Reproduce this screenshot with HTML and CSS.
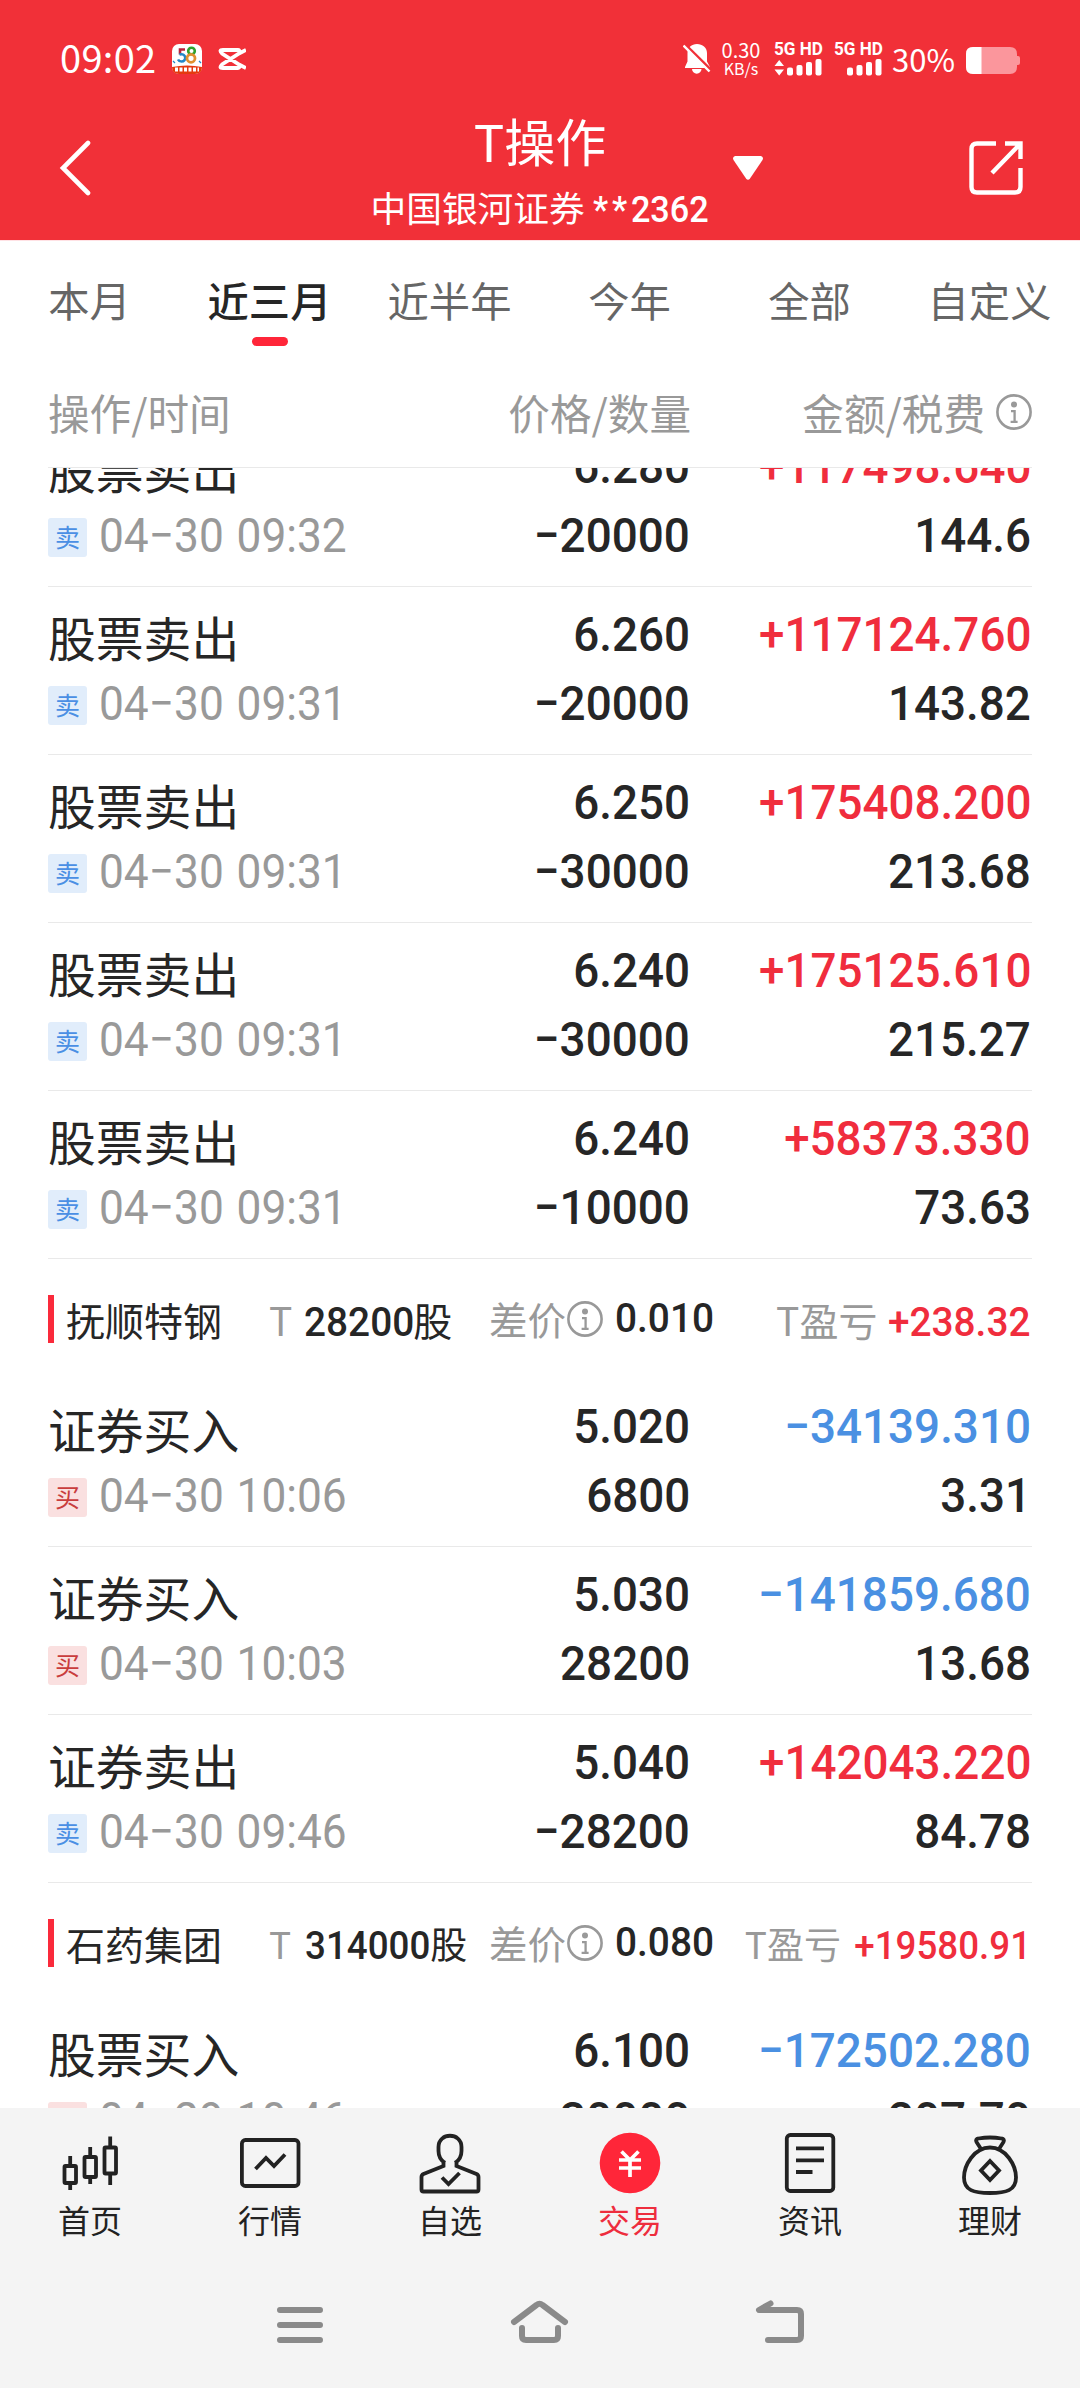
FILE: index.html
```html
<!DOCTYPE html>
<html lang="zh-CN">
<head>
<meta charset="utf-8">
<title>T操作</title>
<link rel="stylesheet" href="styles.css">
</head>
<body>
<svg class="defs" width="0" height="0">
  <symbol id="info" viewBox="0 0 36 36">
    <circle cx="18" cy="18" r="16.6" fill="none" stroke="#999" stroke-width="2.6"/>
    <circle cx="18" cy="10.6" r="3" fill="#999"/>
    <path d="M15 17.2h3.6v10.3M14.6 27.8h7" fill="none" stroke="#999" stroke-width="2.3"/>
  </symbol>
</svg>
<div class="screen">
  <header class="header">
    <div class="status">
      <span class="clock">09:02</span>
      <svg class="app58" width="30" height="30" viewBox="0 0 30 30">
        <rect width="30" height="30" rx="7" fill="#fff"/>
        <path d="M0 23q15-3 30 0q0 7-7 7H7q-7 0-7-7z" fill="#e5390f"/>
        <path d="M3 25.500h24" stroke="#fff" stroke-width="4" stroke-dasharray="3 1.500"/>
        <path d="M13 5.500H8v5" fill="none" stroke="#b8233a" stroke-width="2.600"/>
        <path d="M7.500 10.500c7-2 7.500 7 2 7q-2.500 0-3.500-2" fill="none" stroke="#2287c8" stroke-width="2.600"/>
        <circle cx="19.500" cy="7" r="3.300" fill="none" stroke="#2fa12d" stroke-width="2.600"/>
        <circle cx="19" cy="14.300" r="4" fill="none" stroke="#e09130" stroke-width="2.800"/>
        <path d="M1 17l2 2M27 17l2 2" stroke="#2287c8" stroke-width="1.200"/>
      </svg>
      <svg class="cut" width="28" height="22" viewBox="0 0 28 22">
        <path d="M28 2L21.500 5.200 4 16.500q-3.500 3.500 1 3.500h15q1.500 0 1.500-2.500M28 20L21.500 16.800 4 5.500Q.500 2 5 2h15q1.500 0 1.500 2.500" fill="none" stroke="#fff" stroke-width="3.800"/>
      </svg>
      <div class="status-right">
        <svg width="28" height="30" viewBox="0 0 28 30">
          <path d="M14 0C19.500 0 24 3.500 24 9v8.500l3 5.500v1H2v-1l2.500-5.500V9C4.500 3.500 8.500 0 14 0zM9 25h9.500a4.750 4.750 0 0 1-9.500 0z" fill="#fff"/>
          <path d="M1.500 0L29 27" stroke="#f13038" stroke-width="3"/>
          <path d="M.500 1.500L26.500 27.500" stroke="#fff" stroke-width="2.400"/>
        </svg>
        <span class="speed"><b>0.30</b><i>KB/s</i></span>
        <span class="sim sim1"><b>5G HD</b>
          <svg width="48" height="17" viewBox="0 0 48 17" fill="#fff"><path d="M.500 7L5.200 1 10 7zM.500 10.500h9.500L5.200 16.500z"/><rect x="13" y="8.500" width="6" height="8" rx="2"/><rect x="22.500" y="6" width="6" height="10.500" rx="2"/><rect x="32" y="3" width="6" height="13.500" rx="2"/><rect x="41.500" y="0" width="6" height="16.500" rx="2"/></svg>
        </span>
        <span class="sim sim2"><b>5G HD</b>
          <svg width="48" height="17" viewBox="0 0 48 17" fill="#fff"><rect x="13" y="8.500" width="6" height="8" rx="2"/><rect x="22.500" y="6" width="6" height="10.500" rx="2"/><rect x="32" y="3" width="6" height="13.500" rx="2"/><rect x="41.500" y="0" width="6" height="16.500" rx="2"/></svg>
        </span>
        <span class="pct">30%</span>
        <svg width="54" height="27" viewBox="0 0 54 27">
          <path d="M7 0h37q7 0 7 7v2h1q2 0 2 2v5q0 2-2 2h-1v2q0 7-7 7H7q-7 0-7-7V7q0-7 7-7z" fill="#fb969c"/>
          <path d="M7 0h8.500v27H7q-7 0-7-7V7q0-7 7-7z" fill="#fff"/>
        </svg>
      </div>
    </div>
    <div class="titlebar">
      <svg class="back" width="32" height="56" viewBox="0 0 32 56"><path d="M29 3L4 28l25 25" fill="none" stroke="#fff" stroke-width="4.600" stroke-linecap="round"/></svg>
      <div class="titles">
        <div class="title">T操作</div>
        <div class="account">中国银河证券 <span class="acct-no"><span class="stars">**</span>2362</span></div>
      </div>
      <svg class="caret" width="30" height="24" viewBox="0 0 30 24"><path d="M2 0h26q3 1 1.500 4L17 22.500q-2 2.500-4 0L.500 4Q-1 1 2 0z" fill="#fff"/></svg>
      <svg class="share" width="54" height="54" viewBox="0 0 54 54" fill="none" stroke="#fff" stroke-width="4.400"><path d="M27 2.500H8Q2.500 2.500 2.500 8v38q0 5.500 5.500 5.500h38q5.500 0 5.500-5.500V27"/><path d="M36 2.500h15.500V18M51 3L23 32"/></svg>
    </div>
  </header>

  <nav class="tabs">
    <span>本月</span><span class="on">近三月</span><span>近半年</span><span>今年</span><span>全部</span><span>自定义</span>
  </nav>
  <div class="thead">
    <span>操作/时间</span><span>价格/数量</span><span>金额/税费<svg class="info" width="36" height="36"><use href="#info"/></svg></span>
  </div>

  <main class="list">
    <div class="inner">
    <div class="row">
      <div class="op"><div class="name">股票卖出</div><div class="when"><span class="tag sell">卖</span><span class="date">04−30 09:32</span></div></div>
      <div class="col"><span>6.280</span><span>−20000</span></div>
      <div class="col"><span class="up">+117498.640</span><span>144.6</span></div>
    </div>
    <div class="row">
      <div class="op"><div class="name">股票卖出</div><div class="when"><span class="tag sell">卖</span><span class="date">04−30 09:31</span></div></div>
      <div class="col"><span>6.260</span><span>−20000</span></div>
      <div class="col"><span class="up">+117124.760</span><span>143.82</span></div>
    </div>
    <div class="row">
      <div class="op"><div class="name">股票卖出</div><div class="when"><span class="tag sell">卖</span><span class="date">04−30 09:31</span></div></div>
      <div class="col"><span>6.250</span><span>−30000</span></div>
      <div class="col"><span class="up">+175408.200</span><span>213.68</span></div>
    </div>
    <div class="row">
      <div class="op"><div class="name">股票卖出</div><div class="when"><span class="tag sell">卖</span><span class="date">04−30 09:31</span></div></div>
      <div class="col"><span>6.240</span><span>−30000</span></div>
      <div class="col"><span class="up">+175125.610</span><span>215.27</span></div>
    </div>
    <div class="row">
      <div class="op"><div class="name">股票卖出</div><div class="when"><span class="tag sell">卖</span><span class="date">04−30 09:31</span></div></div>
      <div class="col"><span>6.240</span><span>−10000</span></div>
      <div class="col"><span class="up">+58373.330</span><span>73.63</span></div>
    </div>

    <div class="group">
      <span class="stock">抚顺特钢</span>
      <span class="shares"><span class="lbl">T</span><span class="n">28200</span><span>股</span></span>
      <span class="spread"><span class="lbl">差价</span><svg class="info" width="36" height="36"><use href="#info"/></svg><span class="n">0.010</span></span>
      <span class="profit"><span class="lbl">T盈亏</span><span class="n up">+238.32</span></span>
    </div>
    <div class="row">
      <div class="op"><div class="name">证券买入</div><div class="when"><span class="tag buy">买</span><span class="date">04−30 10:06</span></div></div>
      <div class="col"><span>5.020</span><span>6800</span></div>
      <div class="col"><span class="down">−34139.310</span><span>3.31</span></div>
    </div>
    <div class="row">
      <div class="op"><div class="name">证券买入</div><div class="when"><span class="tag buy">买</span><span class="date">04−30 10:03</span></div></div>
      <div class="col"><span>5.030</span><span>28200</span></div>
      <div class="col"><span class="down">−141859.680</span><span>13.68</span></div>
    </div>
    <div class="row">
      <div class="op"><div class="name">证券卖出</div><div class="when"><span class="tag sell">卖</span><span class="date">04−30 09:46</span></div></div>
      <div class="col"><span>5.040</span><span>−28200</span></div>
      <div class="col"><span class="up">+142043.220</span><span>84.78</span></div>
    </div>

    <div class="group long">
      <span class="stock">石药集团</span>
      <span class="shares"><span class="lbl">T</span><span class="n">314000</span><span>股</span></span>
      <span class="spread"><span class="lbl">差价</span><svg class="info" width="36" height="36"><use href="#info"/></svg><span class="n">0.080</span></span>
      <span class="profit"><span class="lbl">T盈亏</span><span class="n up">+19580.91</span></span>
    </div>
    <div class="row">
      <div class="op"><div class="name">股票买入</div><div class="when"><span class="tag buy">买</span><span class="date">04−29 10:46</span></div></div>
      <div class="col"><span>6.100</span><span>30000</span></div>
      <div class="col"><span class="down">−172502.280</span><span>207.70</span></div>
    </div>
    </div>
  </main>

  <footer class="tabbar">
    <a><svg width="64" height="64" viewBox="58 2131 64 64" fill="none" stroke="#222" stroke-width="3.800"><rect x="64.500" y="2166" width="11.500" height="17" rx="1"/><path d="M70.200 2156v10M70.200 2183v7"/><rect x="84.500" y="2157" width="11.500" height="20" rx="1"/><path d="M90.200 2147v10M90.200 2177v7"/><rect x="104.500" y="2147.500" width="11.500" height="26" rx="1"/><path d="M110.200 2136.500v11M110.200 2173.500v11.500"/></svg>首页</a>
    <a><svg width="64" height="64" viewBox="238 2131 64 64" fill="none" stroke="#222" stroke-width="3.800"><rect x="241.900" y="2140" width="56.600" height="46" rx="3.500"/><path d="M255.500 2169l10.500-11 8 8 11-11.500"/></svg>行情</a>
    <a><svg width="64" height="64" viewBox="418 2131 64 64" fill="none" stroke="#222" stroke-width="3.800"><path d="M443.500 2160.500v5.500L423.500 2174q-2 1-2 3v12.500q0 2 2 2h53q2 0 2-2V2177q0-2-2-3L456.500 2166v-5.500M445 2163q-6.500-4-6.500-12v-4c0-15 23-15 23 0v4q0 8-6.500 12"/><path d="M442 2177.500l6.500 6.500 11-11"/></svg>自选</a>
    <a class="on"><svg width="64" height="64" viewBox="598 2131 64 64" fill="none"><circle cx="630" cy="2163" r="30.300" fill="#ff2639"/><path d="M621.500 2151.500l8.500 8.500 8.500-8.500M619 2160h22M619 2168h22M630 2159v18" stroke="#fff" stroke-width="3.700"/></svg>交易</a>
    <a><svg width="64" height="64" viewBox="778 2131 64 64" fill="none" stroke="#222" stroke-width="3.800"><rect x="786.800" y="2135" width="46.500" height="56" rx="3.500"/><path d="M796 2148.300h28M796 2160.300h28M796 2172h16.500" /></svg>资讯</a>
    <a><svg width="64" height="64" viewBox="958 2131 64 64" fill="none" stroke="#222" stroke-width="3.800" stroke-linejoin="round"><path d="M981 2149l-4.500-7q-1.500-3 2-3.500 11.500-2 23 0 3.500.500 2 3.500l-4.500 7"/><path d="M990 2147.500c-16 0-26 18-26 30 0 13 10 15.500 26 15.500s26-2.500 26-15.500c0-12-10-30-26-30z"/><path d="M990 2161l9 9.500-9 9.500-9-9.500z" stroke-linejoin="miter"/></svg>理财</a>
  </footer>
  <div class="sysnav">
    <svg width="60" height="50" viewBox="270 2296 60 50"><path d="M280 2310h40M280 2325h40M280 2340h40"/></svg>
    <svg width="60" height="50" viewBox="510 2296 60 50"><path d="M514 2322l22.500-17q3-2.500 6 0L565 2322M522 2328v8q0 4 4 4h28q4 0 4-4v-8"/></svg>
    <svg width="60" height="50" viewBox="750 2296 60 50"><path d="M770.500 2303.500L759 2310h38q4 0 4 4v22q0 4-4 4h-29"/></svg>
  </div>
</div>
</body>
</html>
```
FILE: styles.css
```css
* { box-sizing: border-box; }
body {
  margin: 0;
  background: #fff;
  font-family: "Noto Sans CJK SC", sans-serif;
  color: #262626;
}
svg { display: block; flex: none; }
b, i { font-weight: inherit; font-style: normal; }
.defs { position: absolute; }
.screen {
  width: 1080px;
  height: 2388px;
  display: flex;
  flex-direction: column;
  overflow: hidden;
}

/* header */
.header {
  flex: none;
  height: 241px;
  background: #f13038;
  border-bottom: 1px solid #ffe2e5;
  color: #fff;
}
.status {
  height: 108px;
  padding: 44px 60px 0;
  display: flex;
  align-items: flex-start;
}
.clock {
  font-size: 38px;
  line-height: 30px;
  letter-spacing: .3px;
  width: 112px;
  margin-top: -2px;
}
.cut { margin: 4px 0 0 16px; }
.status-right {
  margin-left: auto;
  display: flex;
  align-items: flex-start;
}
.speed {
  display: flex;
  flex-direction: column;
  align-items: center;
  width: 40px;
  margin-left: 10px;
}
.speed b { font-size: 20px; line-height: 18px; margin-top: -3px; }
.speed i { font-size: 16px; line-height: 16px; margin-top: 1px; }
.sim { width: 49px; }
.sim b {
  display: block;
  font-family: Roboto, sans-serif;
  font-weight: 700;
  font-size: 19px;
  line-height: 14px;
  margin-top: -2px;
  margin-bottom: 3px;
  white-space: nowrap;
  transform: scaleX(.9);
  transform-origin: left;
}
.sim1 { margin-left: 13px; }
.sim2 { margin-left: 11px; }
.pct { font-size: 31px; line-height: 30px; width: 62px; margin-left: 9px; }
.status-right > svg:last-child { margin: 3px 0 0 12px; }
.titlebar {
  display: grid;
  grid-template-columns: 300px 360px 249px 60px;
  height: 132px;
  padding-left: 60px;
}
.back { margin-top: 32px; margin-left: -1px; }
.titles { text-align: center; white-space: nowrap; }
.title { font-size: 51px; line-height: 60px; margin-top: 2px; }
.account {
  font-size: 35.700px;
  line-height: 44px;
  margin-top: 15px;
  padding-left: 5px;
}
.acct-no {
  display: inline-block;
  font-family: Roboto, sans-serif;
  font-weight: 500;
  font-size: 36px;
  transform: scaleX(.95);
  transform-origin: left;
}
.stars { letter-spacing: 4px; }
.caret { margin: 48px 0 0 13px; }
.share { margin-top: 33px; }

/* period tabs */
.tabs {
  flex: none;
  height: 111px;
  display: grid;
  grid-template-columns: repeat(6, 180px);
  font-size: 41.300px;
  line-height: 60px;
  padding-top: 28px;
  color: #666;
  text-align: center;
}
.tabs span { margin-left: -1px; }
.tabs .on { color: #262626; font-weight: 500; }
.tabs .on::after {
  content: "";
  display: block;
  width: 36px;
  height: 9px;
  margin: 8px auto 0;
  border-radius: 5px;
  background: #ff2639;
}
.thead {
  flex: none;
  height: 116px;
  margin: 0 48px;
  border-bottom: 1px solid #e9e9e9;
  display: grid;
  grid-template-columns: 343px 300px 341px;
  font-size: 41.600px;
  line-height: 60px;
  padding-top: 30px;
  color: #999;
}
.thead span:nth-child(2) { text-align: right; }
.thead span:nth-child(3) { display: flex; justify-content: flex-end; }
.thead .info { margin: 12px 0 0 11px; }

/* transactions */
.list {
  height: 1640px;
  flex: none;
  padding: 0 48px;
  overflow: hidden;
}
.inner { margin-top: -49px; }
.row {
  height: 168px;
  border-bottom: 1px solid #e9e9e9;
  display: grid;
  grid-template-columns: 343px 300px 341px;
}
.op { padding-top: 26px; }
.name { font-size: 47.800px; line-height: 48px; }
.when {
  display: flex;
  align-items: center;
  height: 48px;
  margin-top: 18px;
}
.tag {
  width: 39px;
  height: 39px;
  margin-top: 5px;
  border-radius: 3px;
  font-size: 25px;
  line-height: 37px;
  text-align: center;
}
.sell { background: #e1edfb; color: #4a8fe4; }
.buy { background: #fae0e0; color: #c93d3d; }
.date, .col span, .n {
  font-family: Roboto, sans-serif;
  font-size: 49px;
  white-space: nowrap;
}
.date {
  margin: 2px 0 0 12px;
  color: #999;
  line-height: 48px;
  word-spacing: 2px;
  transform: scaleX(.903);
  transform-origin: left;
}
.col {
  padding: 24px 1px 0 0;
  display: flex;
  flex-direction: column;
  align-items: flex-end;
  gap: 21px;
}
.col span {
  font-weight: 500;
  line-height: 48px;
  transform: scaleX(.935);
  transform-origin: right;
}
.up, .col .up { color: #f02d3d; }
.col .down { color: #4a90e2; }

/* stock summary */
.group {
  height: 120px;
  display: grid;
  grid-template-columns: 221px 220px 289px 254px;
  font-size: 39px;
  line-height: 48px;
  padding-top: 36px;
}
.group .lbl { color: #999; }
.group .n { font-size: 41.500px; font-weight: 500; line-height: 48px; }
.stock {
  height: 48px;
  border-left: 6px solid #fa2a3b;
  padding-left: 12px;
}
.shares, .spread, .profit { display: flex; height: 48px; white-space: nowrap; }
.shares .n {
  margin: 3px -9px 0 12px;
  transform: scaleX(.935);
  transform-origin: left;
}
.spread .lbl { font-size: 38.500px; margin-top: -1px; }
.spread .info { margin: 6px 0 0 1px; }
.spread .n {
  margin: -1px 0 0 12px;
  transform: scaleX(.935);
  transform-origin: left;
}
.profit { justify-content: flex-end; }
.profit .n {
  margin: 3px 1px 0 1px;
  transform: scaleX(.935);
  transform-origin: right;
}
.long .shares, .long .profit { font-size: 37px; }
.long .shares .n, .long .profit .n { font-size: 39.300px; }
.long .shares .n { margin-left: 14px; }

/* bottom bars */
.tabbar {
  flex: none;
  height: 142px;
  background: #f4f4f4;
  display: grid;
  grid-template-columns: repeat(6, 180px);
  padding-top: 23px;
}
.tabbar a {
  display: flex;
  flex-direction: column;
  align-items: center;
  font-size: 32px;
  line-height: 40px;
  gap: 4px;
  color: #222;
}
.tabbar .on { color: #ee2d3d; }
.sysnav {
  flex: none;
  height: 138px;
  background: #f4f4f4;
  display: flex;
  justify-content: center;
  gap: 180px;
  padding-top: 46px;
}
.sysnav path {
  fill: none;
  stroke: #8a8a8a;
  stroke-width: 6;
  stroke-linecap: round;
  stroke-linejoin: round;
}
```
